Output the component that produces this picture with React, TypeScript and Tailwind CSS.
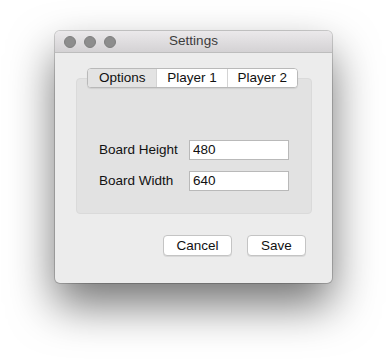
import { useState } from "react";

type Tab = "Options" | "Player 1" | "Player 2";

const tabs: Tab[] = ["Options", "Player 1", "Player 2"];

export default function App() {
  const [tab, setTab] = useState<Tab>("Options");
  const [height, setHeight] = useState("480");
  const [width, setWidth] = useState("640");

  return (
    <main
      className="min-h-screen w-full bg-white pl-[55px] pt-[31px] text-[13.5px] text-[#111]"
      style={{ fontFamily: '"Liberation Sans", Arial, sans-serif' }}
    >
      <div className="flex h-[252px] w-[277px] flex-col overflow-hidden rounded-[5px] bg-[#ececec] shadow-[0_22px_45px_rgba(0,0,0,0.55),0_0_0_1px_rgba(0,0,0,0.18)]">
        {/* title bar */}
        <div className="relative flex h-[22px] shrink-0 items-center justify-center border-b border-[#bdbdbd] bg-gradient-to-b from-[#ebe9eb] to-[#d4d2d4]">
          <div className="absolute left-[9px] top-[5px] flex gap-[8px]">
            <span className="h-[12px] w-[12px] rounded-full border border-[#7f7f7f] bg-[#8d8d8d]" />
            <span className="h-[12px] w-[12px] rounded-full border border-[#7f7f7f] bg-[#8d8d8d]" />
            <span className="h-[12px] w-[12px] rounded-full border border-[#7f7f7f] bg-[#8d8d8d]" />
          </div>
          <span className="text-[13.5px] text-[#3c3c3c]">Settings</span>
        </div>

        <div className="flex flex-col pl-[21px] pr-[20px] pt-[15px]">
          {/* tab control */}
          <div className="relative z-10 ml-[11px] flex h-[20px] w-[211px] overflow-hidden rounded-[4px] border border-[#b9b9b9] bg-white shadow-[0_1px_1px_rgba(0,0,0,0.08)]">
            {tabs.map((t, i) => (
              <button
                key={t}
                type="button"
                onClick={() => setTab(t)}
                className={
                  (i === 0 ? "w-[69px] " : "w-[71px] ") +
                  (i > 0 ? "border-l border-[#d4d4d4] " : "") +
                  (tab === t ? "bg-[#e3e3e3] " : "bg-white ") +
                  "flex items-center justify-center text-[13.5px] leading-none text-[#111]"
                }
              >
                {t}
              </button>
            ))}
          </div>

          {/* group box */}
          <div className="-mt-[10px] flex h-[136px] w-[236px] flex-col gap-[11px] rounded-[4px] border border-[#dadada] bg-[#e2e2e2] pl-[22px] pt-[61px]">
            <div className="flex h-[20px] items-center">
              <span className="w-[90px]">Board Height</span>
              <input
                value={height}
                onChange={(e) => setHeight(e.target.value)}
                className="h-[20px] w-[100px] border border-[#b9b9b9] bg-white pl-[3px] text-[13.5px] outline-none"
              />
            </div>
            <div className="flex h-[20px] items-center">
              <span className="w-[90px]">Board Width</span>
              <input
                value={width}
                onChange={(e) => setWidth(e.target.value)}
                className="h-[20px] w-[100px] border border-[#b9b9b9] bg-white pl-[3px] text-[13.5px] outline-none"
              />
            </div>
          </div>

          {/* buttons */}
          <div className="mt-[21px] flex justify-end gap-[15px] pr-[6px]">
            <button
              type="button"
              className="h-[21px] w-[69px] rounded-[4px] border border-[#c4c4c4] bg-white text-[13.5px] leading-none shadow-[0_1px_0_rgba(0,0,0,0.08)]"
            >
              Cancel
            </button>
            <button
              type="button"
              className="h-[21px] w-[59px] rounded-[4px] border border-[#c4c4c4] bg-white text-[13.5px] leading-none shadow-[0_1px_0_rgba(0,0,0,0.08)]"
            >
              Save
            </button>
          </div>
        </div>
      </div>
    </main>
  );
}
